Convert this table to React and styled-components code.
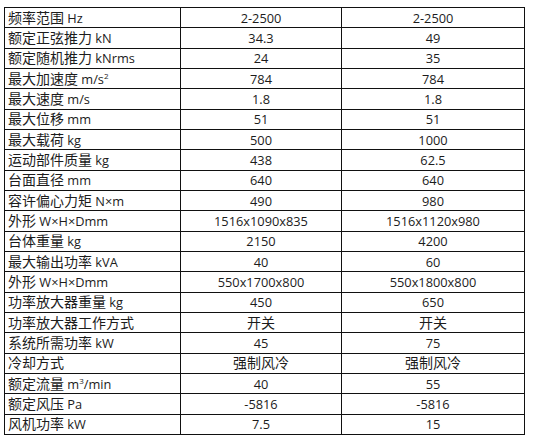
import styled, { createGlobalStyle } from "styled-components";

const GlobalStyle = createGlobalStyle`
  body {
    margin: 0;
    background: #fff;
  }
`;

const Page = styled.div`
  padding: 7px 0 0 4px;
`;

const Table = styled.table`
  border-collapse: collapse;
  table-layout: fixed;
  width: 520px;
  font-family: "Open Sans", "Noto Sans CJK SC", sans-serif;
  font-size: 12.8px;
  color: #1c1c1c;
`;

const Row = styled.tr`
  height: 20.33px;
`;

const Cell = styled.td`
  border: 1px solid #111;
  padding: 0 0 0 ${(props) => (props.$label ? "3px" : "0")};
  text-align: ${(props) => (props.$label ? "left" : "center")};
  line-height: 18px;
  white-space: nowrap;
  overflow: hidden;
`;

// Chinese glyphs sit a size above the latin ones, as in the original font
const Han = styled.span`
  font-family: "Noto Sans CJK SC", sans-serif;
  font-size: 14px;
  line-height: 14px;
`;

const Sup = styled.sup`
  font-size: 8px;
  line-height: 8px;
  vertical-align: 5px;
`;

function Text({ children }) {
  if (typeof children !== "string") return children;
  return children
    .split(/([\u3000-\u9fff]+)/)
    .filter(Boolean)
    .map((part, i) =>
      /[\u3000-\u9fff]/.test(part) ? <Han key={i}>{part}</Han> : part
    );
}

const rows = [
  ["频率范围 Hz", "2-2500", "2-2500"],
  ["额定正弦推力 kN", "34.3", "49"],
  ["额定随机推力 kNrms", "24", "35"],
  [<><Han>最大加速度</Han> m/s<Sup>2</Sup></>, "784", "784"],
  ["最大速度 m/s", "1.8", "1.8"],
  ["最大位移 mm", "51", "51"],
  ["最大载荷 kg", "500", "1000"],
  ["运动部件质量 kg", "438", "62.5"],
  ["台面直径 mm", "640", "640"],
  ["容许偏心力矩 N×m", "490", "980"],
  ["外形 W×H×Dmm", "1516x1090x835", "1516x1120x980"],
  ["台体重量 kg", "2150", "4200"],
  ["最大输出功率 kVA", "40", "60"],
  ["外形 W×H×Dmm", "550x1700x800", "550x1800x800"],
  ["功率放大器重量 kg", "450", "650"],
  ["功率放大器工作方式", "开关", "开关"],
  ["系统所需功率 kW", "45", "75"],
  ["冷却方式", "强制风冷", "强制风冷"],
  [<><Han>额定流量</Han> m<Sup>3</Sup>/min</>, "40", "55"],
  ["额定风压 Pa", "-5816", "-5816"],
  ["风机功率 kW", "7.5", "15"],
];

export default function App() {
  return (
    <Page>
      <GlobalStyle />
      <Table>
        <colgroup>
          <col style={{ width: 176 }} />
          <col style={{ width: 161 }} />
          <col style={{ width: 183 }} />
        </colgroup>
        <tbody>
          {rows.map((r, i) => (
            <Row key={i}>
              <Cell $label><Text>{r[0]}</Text></Cell>
              <Cell><Text>{r[1]}</Text></Cell>
              <Cell><Text>{r[2]}</Text></Cell>
            </Row>
          ))}
        </tbody>
      </Table>
    </Page>
  );
}
